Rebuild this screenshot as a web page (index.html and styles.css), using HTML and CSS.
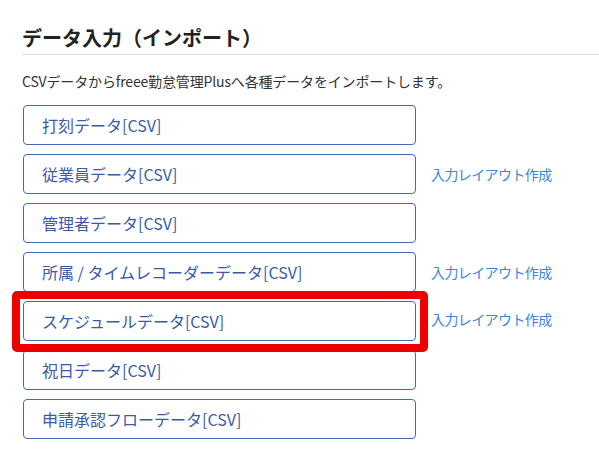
FILE: index.html
```html
<!DOCTYPE html>
<html lang="ja">
<head>
    <meta charset="UTF-8">
    <meta name="viewport" content="width=device-width, initial-scale=1.0">
    <title>データ入力（インポート）</title>
    <link rel="stylesheet" href="styles.css">
</head>
<body>

    <div class="maindiv">
        <h1 class="titulo">データ入力（インポート）</h1>
        <p class="descripcion">CSVデータからfreee勤怠管理Plusへ各種データをインポートします。</p>

        <div class="lista">
            <div class="fila">
                <button class="btn-csv">打刻データ[CSV]</button>
            </div>
            <div class="fila">
                <button class="btn-csv">従業員データ[CSV]</button>
                <a class="enlace" href="#">入力レイアウト作成</a>
            </div>
            <div class="fila">
                <button class="btn-csv">管理者データ[CSV]</button>
            </div>
            <div class="fila">
                <button class="btn-csv">所属 / タイムレコーダーデータ[CSV]</button>
                <a class="enlace" href="#">入力レイアウト作成</a>
            </div>
            <div class="fila">
                <span class="marcado">
                    <button class="btn-csv">スケジュールデータ[CSV]</button>
                </span>
                <a class="enlace enlace-alto" href="#">入力レイアウト作成</a>
            </div>
            <div class="fila">
                <button class="btn-csv">祝日データ[CSV]</button>
            </div>
            <div class="fila">
                <button class="btn-csv">申請承認フローデータ[CSV]</button>
            </div>
        </div>
    </div>

</body>
</html>
```

FILE: styles.css
```css
html,body{
    margin: 0;
    padding: 0;
    background-color: #fff;
    font-family: "Noto Sans CJK JP", "Noto Sans", sans-serif;
}
.maindiv{
    padding: 23px 0 0 22px;
}
.titulo{
    margin: 0;
    font-size: 20px;
    line-height: 30px;
    font-weight: bold;
    color: #222;
    padding-bottom: 1px;
    border-bottom: 1px solid #ddd;
}
.descripcion{
    margin: 16px 0 14px 0;
    font-size: 14px;
    line-height: 20px;
    color: #333;
    letter-spacing: -0.15px;
}
.lista{
    display: flex;
    flex-direction: column;
    gap: 9px;
}
.fila{
    display: flex;
    align-items: center;
}
.btn-csv{
    display: block;
    width: 393px;
    height: 40px;
    margin-left: 1px;
    padding: 0 0 0 18px;
    box-sizing: border-box;
    text-align: left;
    background-color: #fff;
    border: 1px solid #4468b4;
    border-radius: 4px;
    font-family: inherit;
    font-size: 16px;
    color: #3a5aa8;
    cursor: pointer;
}
.btn-csv:hover{
    background-color: #f3f6fc;
}
.enlace{
    margin-left: 15px;
    font-size: 14px;
    color: #3a86dc;
    text-decoration: none;
    letter-spacing: -0.6px;
}
.enlace-alto{
    margin-bottom: 5px;
}
.marcado{
    position: relative;
    display: block;
}
.marcado::after{
    content: "";
    position: absolute;
    top: -10px;
    bottom: -11px;
    left: -10px;
    right: -12px;
    border: 8px solid #ee0000;
    border-radius: 5px;
    pointer-events: none;
}
```
